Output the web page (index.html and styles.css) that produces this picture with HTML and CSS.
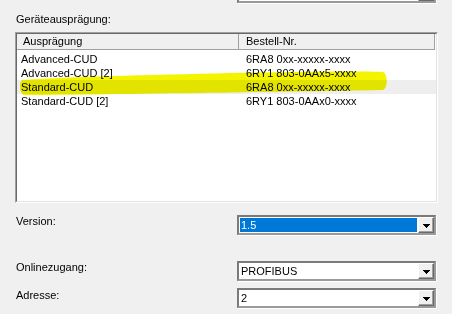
FILE: index.html
```html
<!DOCTYPE html>
<html lang="de">
<head>
    <meta charset="UTF-8">
    <meta name="viewport" content="width=device-width, initial-scale=1.0">
    <title>Geräteauswahl</title>
    <link rel="stylesheet" href="styles.css">
</head>
<body>

    <div class="page">
        <!-- combo cut off at the top edge -->
        <div class="combo combo-top">
            <div class="combo-field"></div>
            <div class="combo-btn"><svg class="arrow" width="7" height="4"><polygon points="0,0 7,0 3.5,4" /></svg></div>
        </div>

        <div class="group-label">Geräteausprägung:</div>

        <div class="listbox">
            <div class="listbox-inner">
                <div class="list-head">
                    <div class="head-col head-name">Ausprägung</div>
                    <div class="head-col head-nr">Bestell-Nr.</div>
                </div>
                <div class="list-body">
                    <div class="row"><span class="cell-name">Advanced-CUD</span><span class="cell-nr">6RA8 0xx-xxxxx-xxxx</span></div>
                    <div class="row"><span class="cell-name">Advanced-CUD [2]</span><span class="cell-nr">6RY1 803-0AAx5-xxxx</span></div>
                    <div class="row hot"><span class="cell-name">Standard-CUD</span><span class="cell-nr">6RA8 0xx-xxxxx-xxxx</span></div>
                    <div class="row"><span class="cell-name">Standard-CUD [2]</span><span class="cell-nr">6RY1 803-0AAx0-xxxx</span></div>
                </div>
            </div>
        </div>

        <div class="field field-version">
            <label>Version:</label>
            <div class="combo">
                <div class="combo-field"><span class="selected">1.5</span></div>
                <div class="combo-btn"><svg class="arrow" width="7" height="4"><polygon points="0,0 7,0 3.5,4" /></svg></div>
            </div>
        </div>

        <div class="field field-online">
            <label>Onlinezugang:</label>
            <div class="combo">
                <div class="combo-field"><span class="value">PROFIBUS</span></div>
                <div class="combo-btn"><svg class="arrow" width="7" height="4"><polygon points="0,0 7,0 3.5,4" /></svg></div>
            </div>
        </div>

        <div class="field field-address">
            <label>Adresse:</label>
            <div class="combo">
                <div class="combo-field"><span class="value">2</span></div>
                <div class="combo-btn"><svg class="arrow" width="7" height="4"><polygon points="0,0 7,0 3.5,4" /></svg></div>
            </div>
        </div>
    </div>

    <!-- yellow highlighter stroke over the list -->
    <svg class="marker" width="452" height="314">
        <path d="M22 80 C60 77, 150 75, 230 73 C300 72, 360 71, 383 72 C388 74, 388 88, 383 90 C330 91, 250 92, 200 93 C120 94, 60 95, 24 95 C19 93, 19 82, 22 80 Z" />
    </svg>

</body>
</html>
```

FILE: styles.css
```css
* {
    margin: 0;
    padding: 0;
    box-sizing: border-box;
}

body {
    position: relative;
    width: 452px;
    height: 314px;
    overflow: hidden;
    background-color: #f0f0f0;
    font-family: "Liberation Sans", Arial, sans-serif;
    font-size: 11px;
    color: #000;
}

.page {
    padding-left: 15px;
}

/* combo boxes */
.combo {
    display: flex;
    width: 199px;
    height: 20px;
    margin-left: 222px;
    border: 2px solid;
    border-color: #7a7a7a #9a9a9a #9a9a9a #7a7a7a;
    box-shadow: 1px 1px 0 #fff;
    background-color: #fff;
}

.combo-top {
    margin-top: -17px;
}

.combo-field {
    flex: 1;
    padding: 1px;
    line-height: 14px;
}

.selected {
    display: block;
    height: 14px;
    padding-left: 1px;
    background-color: #0078d7;
    color: #fff;
}

.value {
    display: block;
    padding-left: 1px;
}

.combo-btn {
    width: 16px;
    display: flex;
    align-items: center;
    justify-content: center;
    background-color: #f0f0f0;
    border: 1px solid;
    border-color: #fff #696969 #696969 #fff;
    box-shadow: inset -1px -1px 0 #a0a0a0;
}

.arrow {
    display: block;
    margin-top: 1px;
    shape-rendering: crispEdges;
}

.arrow polygon {
    fill: #000;
}

/* list */
.group-label {
    margin-top: 10px;
    line-height: 13px;
    padding-left: 1px;
}

.listbox {
    margin-top: 6px;
    width: 423px;
    height: 171px;
    border: 1px solid;
    border-color: #a0a0a0 #fff #fff #a0a0a0;
}

.listbox-inner {
    height: 100%;
    border: 1px solid;
    border-color: #696969 #e3e3e3 #e3e3e3 #696969;
    background-color: #fff;
}

.list-head {
    display: flex;
    height: 16px;
    line-height: 15px;
    background-color: #f0f0f0;
    border-bottom: 1px solid #a0a0a0;
    width: 418px;
}

.head-col {
    border-right: 1px solid #a0a0a0;
}

.head-name {
    width: 222px;
    padding-left: 6px;
}

.head-nr {
    width: 196px;
    padding-left: 7px;
}

.list-body {
    padding-top: 2px;
}

.row {
    display: flex;
    height: 14px;
    line-height: 14px;
    padding-left: 4px;
}

.row.hot {
    background-color: #eeeeee;
}

.cell-name {
    width: 225px;
}

/* form fields below the list */
.field {
    display: flex;
    align-items: flex-start;
}

.field label {
    width: 222px;
    line-height: 13px;
    padding-left: 1px;
}

.field .combo {
    margin-left: 0;
}

.field-version {
    margin-top: 12px;
}

.field-online {
    margin-top: 26px;
}

.field-address {
    margin-top: 7px;
}

.field-address label {
    padding-top: 1px;
}

.marker {
    position: absolute;
    left: 0;
    top: 0;
    pointer-events: none;
    mix-blend-mode: multiply;
}

.marker path {
    fill: #f4f400;
}
```
